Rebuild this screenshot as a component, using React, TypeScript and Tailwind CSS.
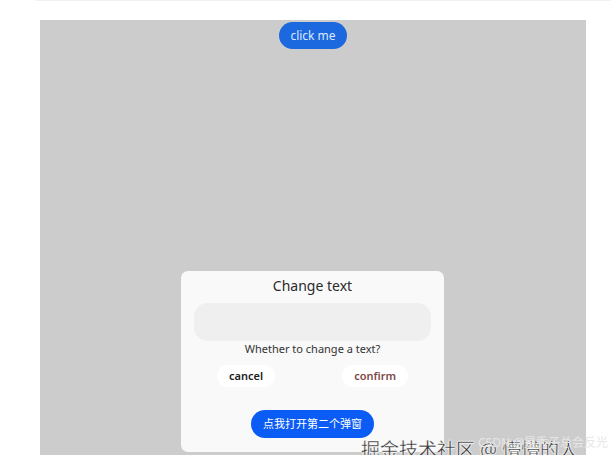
export default function App() {
  return (
    <div
      className="relative h-[455px] w-[611px] overflow-hidden bg-white"
      style={{ fontFamily: '"Noto Sans", "Noto Sans CJK SC", sans-serif' }}
    >
      <div className="ml-[36px] h-px bg-[#f1f1f1]" />
      <div className="relative ml-[40px] mt-[19px] h-[435px] w-[546px] bg-[#cccccc]">
        <div className="flex justify-center pt-[2px]">
          <button className="h-[27px] rounded-full bg-[#1b68df] px-[11px] text-[12px] text-[#dfe9fb]">
            click me
          </button>
        </div>

        {/* dialog */}
        <div className="absolute left-[141px] top-[251px] flex h-[181px] w-[263px] flex-col items-center rounded-[7px] bg-[#f9f9f9]">
          <h2 className="mt-[5px] text-[14px] leading-[20px] text-[#2a2a2a]">Change text</h2>
          <div className="mt-[7px] h-[38px] w-[237px] rounded-[14px] bg-[#efefef]" />
          <p className="mt-0 text-[11px] leading-[16px] text-[#333]">Whether to change a text?</p>
          <div className="mt-[8px] flex w-full justify-between px-[36px]">
            <span className="rounded-full bg-white px-[12px] py-[3px] text-[11px] leading-[16px] font-semibold text-[#222]">
              cancel
            </span>
            <span className="rounded-full bg-white px-[12px] py-[3px] text-[11px] leading-[16px] font-semibold text-[#7c4a45]">
              confirm
            </span>
          </div>
          <button className="mt-[23px] h-[28px] w-[123px] rounded-full bg-[#0a5cf5] text-[11px] text-white">
            点我打开第二个弹窗
          </button>
        </div>
      </div>

      {/* watermarks */}
      <span
        className="absolute left-[361px] top-[438px] text-[19px] leading-[24px] text-[#333] whitespace-nowrap"
        style={{ WebkitTextStroke: '0.3px #fff', textShadow: '0 0 2px #fff, 0 0 2px #fff' }}
      >
        掘金技术社区 @ 懵懵的人
      </span>
      <span className="absolute left-[478px] top-[436px] text-[12px] leading-[14px] text-[#e6e6e6] whitespace-nowrap">
        CSDN @是秀子总会反光
      </span>
    </div>
  );
}
